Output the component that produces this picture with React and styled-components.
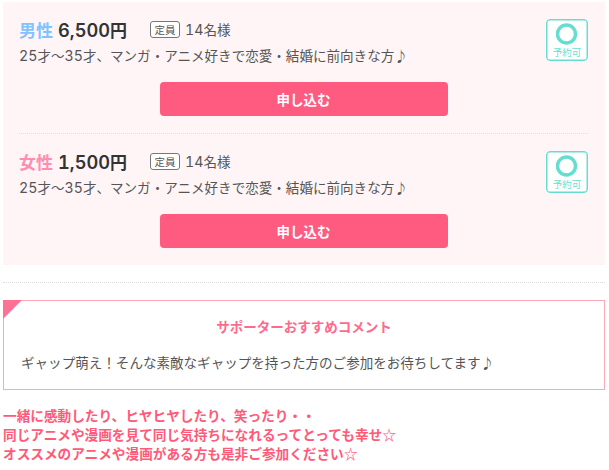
import React from 'react';
import styled, { createGlobalStyle } from 'styled-components';

const GlobalStyle = createGlobalStyle`
  * {
    box-sizing: border-box;
  }

  body {
    margin: 0;
    background: #fff;
    color: #555;
    font-family: 'Noto Sans CJK JP', sans-serif;
    font-size: 13.55px;
    line-height: 19px;
    white-space: nowrap;
  }

  h3, p {
    margin: 0;
  }
`;

const Page = styled.main`
  width: 609px;
  height: 470px;
  padding: 2px 4px 0 3px;
  overflow: hidden;
`;

const Panel = styled.section`
  height: 263px;
  padding: 0 17px 0 16px;
  background: #fff5f6;
`;

const Plan = styled.div`
  height: 131px;
  padding-top: 17px;

  & + & {
    border-top: 1px dotted #e6dcdd;
  }
`;

const PlanTop = styled.div`
  display: flex;
  justify-content: space-between;
  height: 49px;
`;

const PlanHead = styled.div`
  display: flex;
  align-items: center;
  height: 21px;
  margin-bottom: 6px;
`;

const Gender = styled.span`
  width: 39px;
  color: ${(props) => props.$color};
  font-size: 17px;
  font-weight: 700;
`;

const Price = styled.span`
  width: 92px;
  color: #333;
  font-size: 17px;
  font-weight: 700;
`;

const Num = styled.span`
  font-family: Inter, sans-serif;
  font-size: ${(props) => (props.$bold ? '18.2px' : '14.2px')};
  font-weight: ${(props) => (props.$bold ? 600 : 400)};
  font-variant-numeric: tabular-nums;
  line-height: 1;
`;

const Label = styled.span`
  width: 30px;
  height: 17px;
  margin-right: 5px;
  border: 1px solid #777;
  border-radius: 3px;
  background: #fff;
  font-size: 10.5px;
  line-height: 15px;
  text-align: center;
`;

const Status = styled.div`
  display: flex;
  flex-direction: column;
  align-items: center;
  width: 42px;
  height: 42px;
  border: 1px solid #66decf;
  box-shadow: inset 0 0 0 0.5px #66decf;
  border-radius: 4px;
  background: #fff;
  color: #66decf;
  font-size: 9.5px;
  line-height: 12px;
`;

const Ring = styled.svg`
  width: 22px;
  height: 22px;
  margin: 3px 0 1px;
`;

const Apply = styled.button`
  display: block;
  width: 288px;
  height: 34px;
  margin: 14px auto 0;
  padding: 0;
  border: 0;
  border-radius: 4px;
  background: #ff5a7f;
  color: #fff;
  font: 700 13.5px/34px 'Noto Sans CJK JP', sans-serif;
`;

const Divider = styled.hr`
  margin: 17px 0;
  border: 0;
  border-top: 1px dotted #ddd;
`;

const Comment = styled.section`
  position: relative;
  height: 90px;
  padding: 16px 17px;
  border: 1px solid #ffa6b7;

  &::before {
    content: '';
    position: absolute;
    top: -1px;
    left: -1px;
    border-top: 19px solid #ff7293;
    border-right: 19px solid transparent;
  }

  h3 {
    margin-bottom: 17px;
    color: #ff6a8c;
    font-size: 13.5px;
    text-align: center;
  }
`;

const Message = styled.div`
  margin-top: 16px;
  color: #ff5a78;
  font-size: 13.65px;
  font-weight: 700;
`;

const plans = [
  { gender: '男性', color: '#80c4ff', price: '6,500' },
  { gender: '女性', color: '#ff8db0', price: '1,500' },
];

const App = () => (
  <Page>
    <GlobalStyle />
    <Panel>
      {plans.map((plan) => (
        <Plan key={plan.gender}>
          <PlanTop>
            <div>
              <PlanHead>
                <Gender $color={plan.color}>{plan.gender}</Gender>
                <Price>
                  <Num $bold>{plan.price}</Num>円
                </Price>
                <Label>定員</Label>
                <span>
                  <Num>14</Num>名様
                </span>
              </PlanHead>
              <p>
                <Num>25</Num>才〜<Num>35</Num>
                才、マンガ・アニメ好きで恋愛・結婚に前向きな方♪
              </p>
            </div>
            <Status>
              <Ring viewBox="0 0 22 22">
                <circle cx="10.5" cy="11" r="9" fill="none" stroke="#66decf" strokeWidth="3.5" />
              </Ring>
              予約可
            </Status>
          </PlanTop>
          <Apply type="button">申し込む</Apply>
        </Plan>
      ))}
    </Panel>
    <Divider />
    <Comment>
      <h3>サポーターおすすめコメント</h3>
      <p>ギャップ萌え！そんな素敵なギャップを持った方のご参加をお待ちしてます♪</p>
    </Comment>
    <Message>
      一緒に感動したり、ヒヤヒヤしたり、笑ったり・・
      <br />
      同じアニメや漫画を見て同じ気持ちになれるってとっても幸せ☆
      <br />
      オススメのアニメや漫画がある方も是非ご参加ください☆
    </Message>
  </Page>
);

export default App;
